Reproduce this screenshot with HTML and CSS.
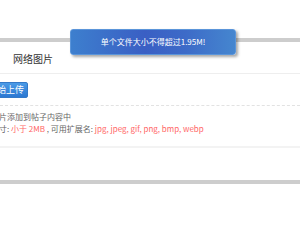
FILE: index.html
```html
<!DOCTYPE html>
<html lang="zh-CN">
<head>
  <meta charset="UTF-8">
  <meta name="viewport" content="width=device-width, initial-scale=1.0">
  <title>上传图片</title>
  <link rel="stylesheet" href="styles.css">
</head>
<body>
  <div class="dialog">
    <div class="top-space"></div>
    <div class="bar"></div>

    <!-- Tabs -->
    <div class="tabs">
      <span class="tab">网络图片</span>
    </div>

    <!-- Upload button -->
    <div class="upload-row">
      <button class="btn-upload">开始上传</button>
    </div>

    <!-- Tips -->
    <div class="tips">
      <p>选择图片添加到帖子内容中</p>
      <p>文件尺寸: <em>小于 2MB</em> , 可用扩展名: <em>jpg, jpeg, gif, png, bmp, webp</em></p>
    </div>

    <div class="bottom-space"></div>
    <div class="bar"></div>
  </div>

  <!-- Toast -->
  <div class="toast">单个文件大小不得超过1.95M!</div>
</body>
</html>
```

FILE: styles.css
```css
/* General styles */
body {
  margin: 0;
  padding: 0;
  width: 300px;
  height: 230px;
  overflow: hidden;
  background-color: #fff;
  font-family: "Noto Sans CJK SC", "Liberation Sans", sans-serif;
  position: relative;
}

.top-space {
  height: 38px;
}

.bar {
  height: 4px;
  background-color: #cdcdcd;
}

/* Tabs */
.tabs {
  height: 31px;
  border-bottom: 1px solid #eee;
  display: flex;
  align-items: center;
  padding-left: 13px;
}

.tab {
  font-size: 10px;
  color: #333;
  padding-top: 1px;
}

/* Upload row */
.upload-row {
  padding: 8px 0 7px;
  border-bottom: 1px dashed #e2e2e2;
}

.btn-upload {
  display: block;
  margin-left: -16px;
  height: 16px;
  padding: 0 3px;
  font-family: inherit;
  font-size: 9px;
  line-height: 14px;
  color: #fff;
  background: linear-gradient(#4b9be6, #2b78d2);
  border: 1px solid #3479c8;
  border-radius: 2px;
}

/* Tips */
.tips {
  padding: 5px 0 11px;
  margin-left: -25px;
  border-bottom: 2px solid #f3f3f3;
}

.tips p {
  margin: 0;
  font-size: 8px;
  line-height: 12px;
  color: #666;
  white-space: nowrap;
}

.tips em {
  font-style: normal;
  color: #f66;
}

.bottom-space {
  height: 32px;
}

/* Toast */
.toast {
  position: absolute;
  left: 70px;
  top: 29px;
  width: 164px;
  height: 24px;
  line-height: 24px;
  text-align: center;
  font-size: 8px;
  color: #fff;
  border: 1px solid #5b95da;
  border-radius: 3px;
  background: linear-gradient(to right, #3d7fce, #3a5fc4 45%, #3d6bc8 70%, #4586cf);
  box-shadow: 2px 2px 3px rgba(0, 0, 0, 0.35);
}
```
